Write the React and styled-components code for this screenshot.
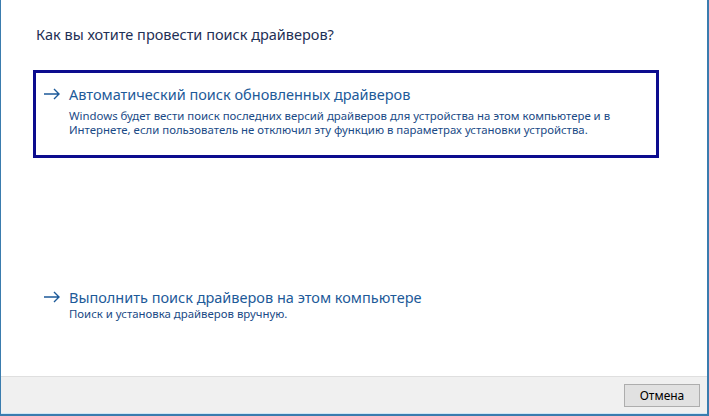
import styled, { createGlobalStyle } from "styled-components";

const GlobalStyle = createGlobalStyle`
  html, body {
    margin: 0;
    padding: 0;
    background: #ffffff;
  }
  body {
    font-family: "Noto Sans", "Open Sans", sans-serif;
  }
`;

const Window = styled.div`
  box-sizing: border-box;
  width: 709px;
  height: 416px;
  display: flex;
  flex-direction: column;
  border-left: 1px solid #3a7cae;
  border-right: 2px solid #3a7cae;
  border-bottom: 2px solid #3a7cae;
  background: #ffffff;
`;

const Content = styled.div`
  flex: 1;
  display: flex;
  flex-direction: column;
  padding: 24px 0 0 35px;
`;

const Title = styled.div`
  font-size: 14.5px;
  color: #1e2f55;
  line-height: 20px;
  margin-bottom: 26px;
`;

const Options = styled.div`
  display: flex;
  flex-direction: column;
  gap: 115px;
`;

const CommandLink = styled.div`
  box-sizing: border-box;
  width: ${(p) => (p.$selected ? "626px" : "auto")};
  margin-left: -3px;
  padding: ${(p) => (p.$selected ? "11px 10px 19px 7px" : "14px 13px 17px 10px")};
  border: ${(p) => (p.$selected ? "3px solid #0c0c8e" : "none")};
  display: grid;
  grid-template-columns: 26px 1fr;
  align-items: start;
`;

const Arrow = styled.svg`
  margin-top: 4px;
`;

const LinkTitle = styled.div`
  font-size: 14.5px;
  line-height: 20px;
  color: #1d5a99;
`;

const LinkText = styled.div`
  font-size: 11.4px;
  line-height: 13.5px;
  color: #1a4a86;
  margin-top: ${(p) => (p.$selected ? "5px" : "0")};
`;

const Footer = styled.div`
  height: 36px;
  background: #f0f0f0;
  border-top: 1px solid #dfdfdf;
  border-bottom: 1px solid #cfe6f5;
  display: flex;
  justify-content: flex-end;
  align-items: center;
  padding-right: 7px;
`;

const Button = styled.button`
  width: 76px;
  height: 23px;
  background: #e1e1e1;
  border: 1px solid #adadad;
  font-family: "Noto Sans", "Open Sans", sans-serif;
  font-size: 12px;
  color: #000;
  padding: 0;
`;

function ArrowIcon() {
  return (
    <Arrow width="18" height="12" viewBox="0 0 18 12">
      <path
        d="M1 6 H16 M11 1 L16 6 L11 11"
        fill="none"
        stroke="#1d5a99"
        strokeWidth="1.4"
      />
    </Arrow>
  );
}

function Option({ title, text, selected }) {
  return (
    <CommandLink $selected={selected}>
      <ArrowIcon />
      <div>
        <LinkTitle>{title}</LinkTitle>
        <LinkText $selected={selected}>{text}</LinkText>
      </div>
    </CommandLink>
  );
}

export default function App() {
  return (
    <>
      <GlobalStyle />
      <Window>
        <Content>
          <Title>Как вы хотите провести поиск драйверов?</Title>
          <Options>
            <Option
              selected
              title="Автоматический поиск обновленных драйверов"
              text={
                <>
                  Windows будет вести поиск последних версий драйверов для
                  устройства на этом компьютере и в
                  <br />
                  Интернете, если пользователь не отключил эту функцию в
                  параметрах установки устройства.
                </>
              }
            />
            <Option
              title="Выполнить поиск драйверов на этом компьютере"
              text="Поиск и установка драйверов вручную."
            />
          </Options>
        </Content>
        <Footer>
          <Button>Отмена</Button>
        </Footer>
      </Window>
    </>
  );
}
